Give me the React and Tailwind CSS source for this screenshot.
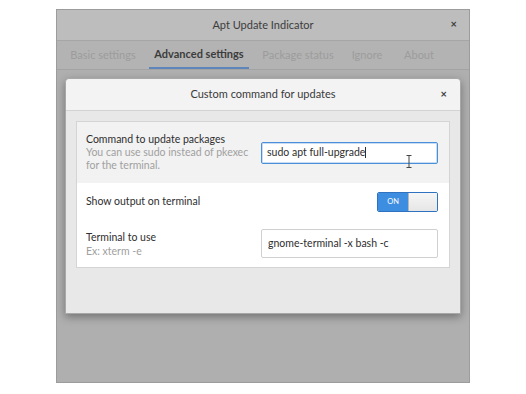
import React from "react";

const font = { fontFamily: 'Lato, "Open Sans", sans-serif' };

export default function App() {
  return (
    <div className="w-[526px] h-[394px] bg-white overflow-hidden" style={font}>
      <div className="relative ml-[56px] mt-[9px] w-[414px] h-[374px] border border-[#9c9c9c] bg-[#afafaf] flex flex-col">
        {/* title bar */}
        <div className="h-[30px] bg-[#bdbdbd] flex items-center justify-center relative shrink-0">
          <span className="text-[11px] text-[#3c3c3c]">Apt Update Indicator</span>
          <span className="absolute right-[12px] top-[8px] text-[11px] font-bold text-[#3c3c3c] leading-none">×</span>
        </div>
        {/* tabs */}
        <div className="h-[30px] bg-[#b3b3b3] border-t border-[#a6a6a6] border-b border-b-[#a3a3a3] flex items-stretch text-[11px] whitespace-nowrap shrink-0">
          <div className="w-[92px] flex items-center justify-center text-[#9c9c9c]">Basic settings</div>
          <div className="w-[100px] flex items-center justify-center text-[#3c3c3c] font-bold border-b-2 border-[#5f86bb]">Advanced settings</div>
          <div className="w-[98px] flex items-center justify-center text-[#9c9c9c]">Package status</div>
          <div className="w-[40px] flex items-center justify-center text-[#9c9c9c]">Ignore</div>
          <div className="w-[64px] flex items-center justify-center text-[#9c9c9c]">About</div>
        </div>
        <div className="flex-1 bg-[#afafaf]" />

        {/* dialog */}
        <div className="absolute left-[8px] top-[68px] w-[396px] h-[236px] bg-[#e8e8e8] border border-[#a8a8a8] rounded-t-[4px] shadow-[0_3px_8px_rgba(0,0,0,0.35)] flex flex-col">
          <div className="h-[32px] bg-[#f3f3f3] border-b border-[#d3d3d3] rounded-t-[4px] flex items-center justify-center relative shrink-0">
            <span className="text-[11px] text-[#3a3a3a]">Custom command for updates</span>
            <span className="absolute right-[13px] top-[9px] text-[11px] font-bold text-[#3c3c3c] leading-none">×</span>
          </div>
          <div className="mt-[10px] mx-[10px] border border-[#d4d4d4] bg-white flex flex-col">
            {/* row 1 */}
            <div className="h-[61px] bg-[#f2f2f2] flex items-center justify-between pl-[9px] pr-[11px]">
              <div className="flex flex-col leading-[13px] text-[10.5px]">
                <span className="text-[#2e2e2e]">Command to update packages</span>
                <span className="text-[#a0a0a0]">You can use sudo instead of pkexec</span>
                <span className="text-[#a0a0a0]">for the terminal.</span>
              </div>
              <div className="relative w-[177px] h-[22px] bg-white border border-[#4a90d9] rounded-[2px] flex items-center px-[5px] text-[10.5px] text-[#2e2e2e] shadow-[inset_0_0_0_1px_rgba(74,144,217,0.3)]">
                <span>sudo apt full-upgrade</span>
                <span className="w-px h-[11px] bg-[#2e2e2e]" />
                <svg className="absolute left-[144px] top-[12px]" width="6" height="13" viewBox="0 0 6 13">
                  <path d="M0.5 0.5h5M3 0.5v12M0.5 12.5h5" stroke="#444" strokeWidth="1" fill="none" />
                </svg>
              </div>
            </div>
            {/* row 2 */}
            <div className="h-[37px] flex items-center justify-between pl-[9px] pr-[11px]">
              <span className="text-[10.5px] text-[#2e2e2e]">Show output on terminal</span>
              <div className="w-[61px] h-[20px] rounded-[2px] border border-[#2f73c0] flex overflow-hidden">
                <div className="w-[30px] bg-[#3d8ee0] flex items-center justify-center text-[7.5px] text-white">ON</div>
                <div className="flex-1 bg-gradient-to-b from-[#f6f6f6] to-[#e6e6e6] border-l border-[#b8b8b8]" />
              </div>
            </div>
            {/* row 3 */}
            <div className="h-[47px] flex items-center justify-between pl-[9px] pr-[11px]">
              <div className="flex flex-col leading-[14px] text-[10.5px]">
                <span className="text-[#2e2e2e]">Terminal to use</span>
                <span className="text-[#a0a0a0]">Ex: xterm -e</span>
              </div>
              <div className="w-[177px] h-[29px] bg-white border border-[#d0d0d0] rounded-[2px] flex items-center px-[6px] text-[10.5px] text-[#2e2e2e]">
                gnome-terminal -x bash -c
              </div>
            </div>
          </div>
        </div>
      </div>
    </div>
  );
}
